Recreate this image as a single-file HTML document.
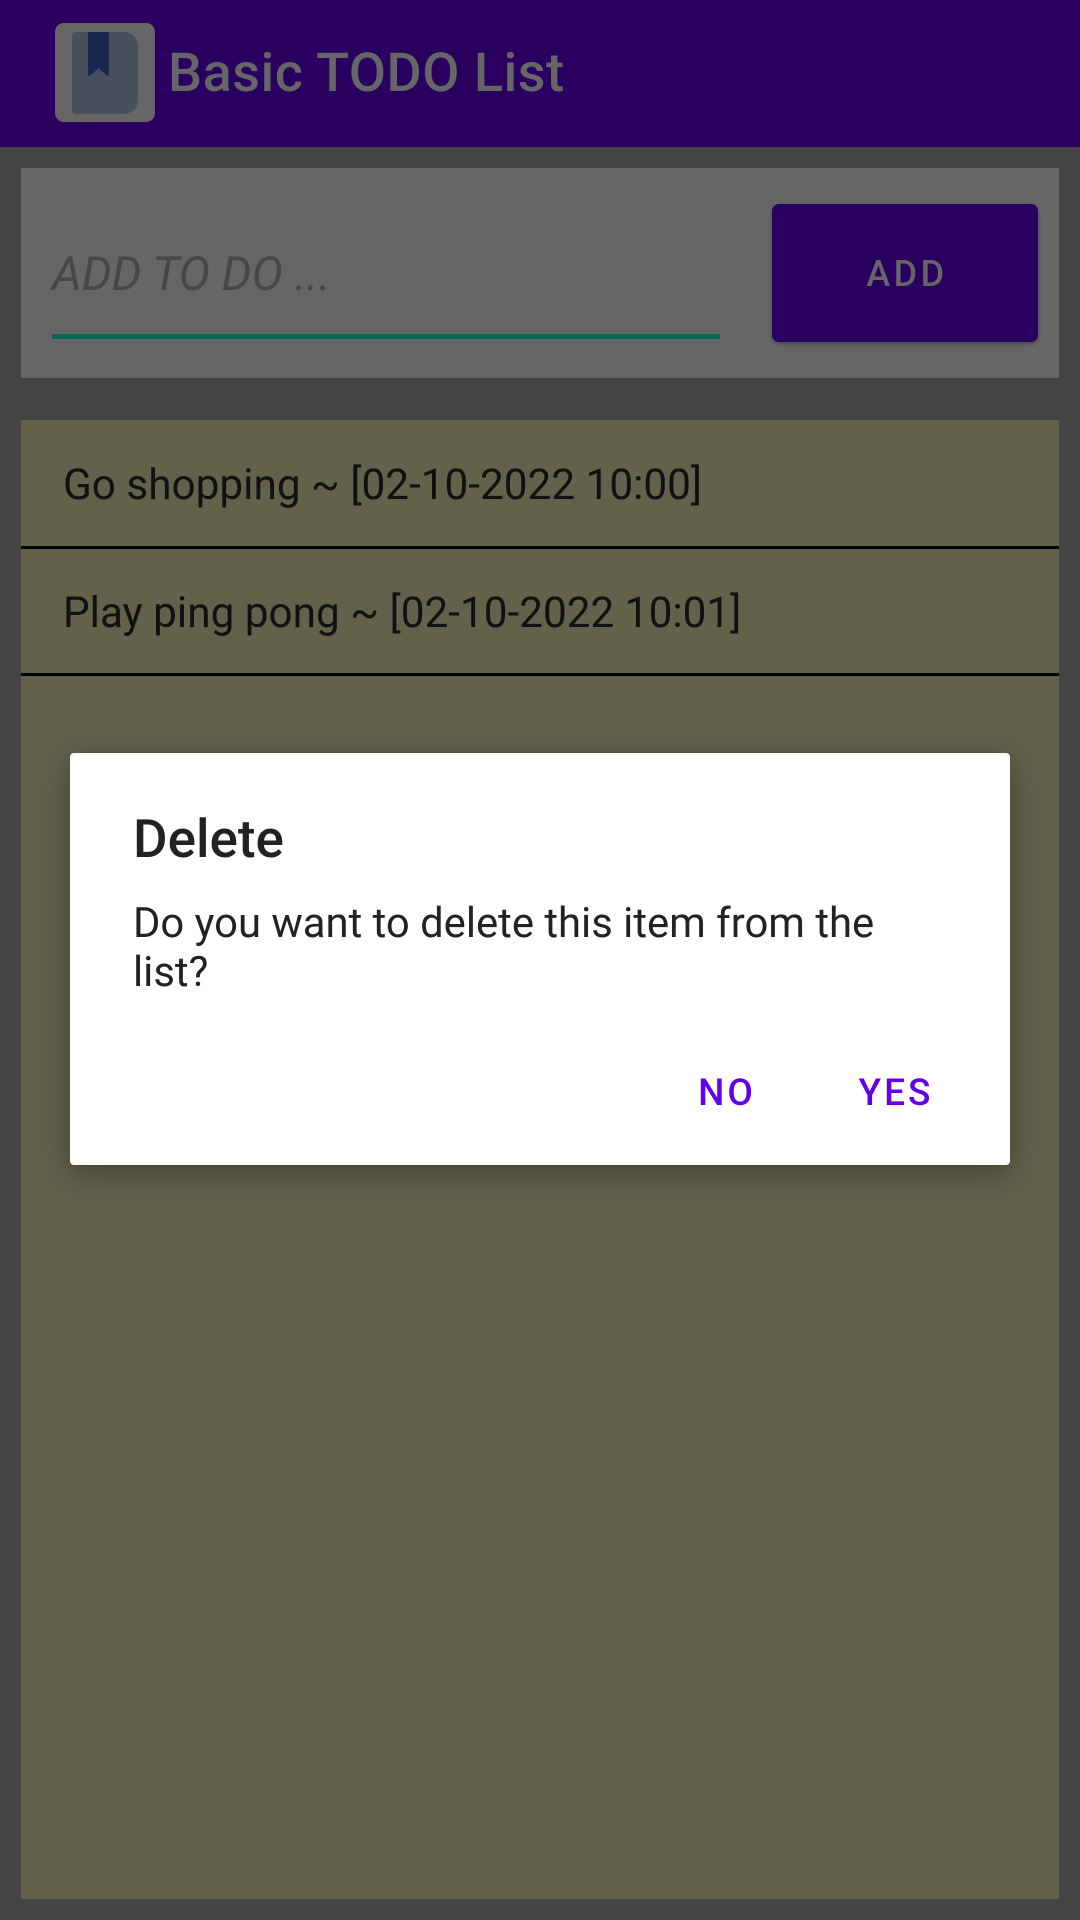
<!DOCTYPE html>
<html><head><meta charset="utf-8"><style>
*{margin:0;padding:0;box-sizing:border-box}
body{width:1080px;height:1920px;background:#444;font-family:"Roboto","Liberation Sans",sans-serif;position:relative;overflow:hidden}
.abs{position:absolute}
</style></head><body>
<div class="abs" style="left:0;top:0;width:1080px;height:147px;background:#290060"></div>
<div class="abs" style="left:55px;top:23px;width:100px;height:99px;background:#666;border-radius:9px"></div>
<div class="abs" style="left:72px;top:32px;width:66px;height:82px;background:#48505e;border-radius:3px 14px 14px 3px"></div>
<svg class="abs" style="left:88px;top:32px" width="22" height="46" viewBox="0 0 22 46"><path d="M0 0H21V42Q21 45 18 43L10.5 36L3 43Q0 45 0 42Z" fill="#172850"/></svg>
<div class="abs" style="left:168px;top:42px;font-size:54px;color:#666;font-weight:500;letter-spacing:0.5px">Basic TODO List</div>

<div class="abs" style="left:21px;top:168px;width:1038px;height:210px;background:#666"></div>
<div class="abs" style="left:52px;top:247px;font-size:47px;color:#474747;font-style:italic">ADD TO DO ...</div>
<div class="abs" style="left:52px;top:334px;width:668px;height:5px;background:#06665a"></div>
<div class="abs" style="left:772px;top:204px;width:266px;height:138px;background:#290060;border-radius:7px;box-shadow:0 2px 4px rgba(0,0,0,.3)"></div>
<div class="abs" style="left:774px;top:253px;width:266px;text-align:center;font-size:36px;color:#666;font-weight:500;letter-spacing:3.5px">ADD</div>

<div class="abs" style="left:21px;top:420px;width:1038px;height:1479px;background:#62614a"></div>
<div class="abs" style="left:63px;top:461px;font-size:42.3px;color:#111">Go shopping ~ [02-10-2022 10:00]</div>
<div class="abs" style="left:21px;top:546px;width:1038px;height:3px;background:#000"></div>
<div class="abs" style="left:63px;top:589px;font-size:42.3px;color:#111">Play ping pong ~ [02-10-2022 10:01]</div>
<div class="abs" style="left:21px;top:673px;width:1038px;height:3px;background:#000"></div>

<div class="abs" style="left:70px;top:753px;width:940px;height:412px;background:#fff;border-radius:4px;box-shadow:0 8px 30px rgba(0,0,0,.35)"></div>
<div class="abs" style="left:133px;top:808px;font-size:53px;color:#222;font-weight:500">Delete</div>
<div class="abs" style="left:133px;top:899px;width:790px;font-size:41.8px;line-height:49px;color:#222">Do you want to delete this item from the list?</div>
<div class="abs" style="left:682px;top:1072px;width:90px;text-align:center;font-size:37px;color:#6200ee;font-weight:500;letter-spacing:3px">NO</div>
<div class="abs" style="left:846px;top:1072px;width:100px;text-align:center;font-size:37px;color:#6200ee;font-weight:500;letter-spacing:3px">YES</div>
</body></html>
